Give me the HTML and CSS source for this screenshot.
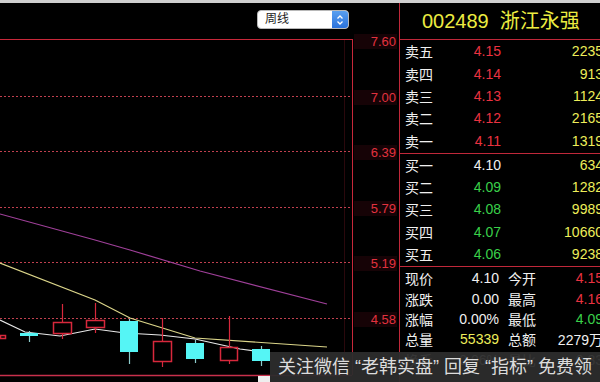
FILE: index.html
```html
<!DOCTYPE html>
<html>
<head>
  <title>002489 浙江永强 周线</title>
  <link rel="stylesheet" href="styles.css">
</head>
<body>
  <div class="topbar"></div>
  <div class="main">

    <!-- chart side -->
    <div class="chart-area">
      <div class="toolbar">
        <div class="select">
          <span class="select-text">周线</span>
          <span class="stepper">
            <svg width="8" height="12" viewBox="0 0 8 12">
              <path d="M1.5 4.5 L4 2 L6.5 4.5 M1.5 7.5 L4 10 L6.5 7.5" fill="none" stroke="#fff" stroke-width="1.3"/>
            </svg>
          </span>
        </div>
      </div>

      <svg class="chart" width="399" height="349" viewBox="0 33 399 349">
        <!-- frame -->
        <line x1="0" y1="39.5" x2="352" y2="39.5" stroke="#c8283a"/>
        <line x1="344.5" y1="40" x2="344.5" y2="375" stroke="#2a080c"/>
        <line x1="352.5" y1="39" x2="352.5" y2="375" stroke="#c8283a"/>
        <line x1="0" y1="375.5" x2="352" y2="375.5" stroke="#c8304c" stroke-width="1.5"/>

        <!-- grid -->
        <g stroke="#c0404f" stroke-dasharray="2 2">
          <line x1="0" y1="96.5" x2="350" y2="96.5"/>
          <line x1="0" y1="151.5" x2="350" y2="151.5"/>
          <line x1="0" y1="207.5" x2="350" y2="207.5"/>
          <line x1="0" y1="262.5" x2="350" y2="262.5"/>
          <line x1="0" y1="318.5" x2="350" y2="318.5"/>
        </g>

        <!-- axis -->
        <g class="axis">
          <rect x="354" y="34" width="43" height="15"/>
          <rect x="354" y="90" width="43" height="15"/>
          <rect x="354" y="145" width="43" height="15"/>
          <rect x="354" y="201" width="43" height="15"/>
          <rect x="354" y="256" width="43" height="15"/>
          <rect x="354" y="312" width="43" height="15"/>
          <text x="396" y="46">7.60</text>
          <text x="396" y="102">7.00</text>
          <text x="396" y="157">6.39</text>
          <text x="396" y="213">5.79</text>
          <text x="396" y="268">5.19</text>
          <text x="396" y="324">4.58</text>
        </g>

        <!-- moving averages -->
        <polyline points="0,214 95,240 130,250 200,271 327,304" fill="none" stroke="#a0409a" stroke-width="1.2"/>
        <polyline points="0,263 95,300 130,318 195,338 327,347" fill="none" stroke="#dcd68a" stroke-width="1.2"/>
        <polyline points="0,320 25,332 60,336 95,329 125,333 160,335 195,339 240,349 262,352" fill="none" stroke="#e8e8e8" stroke-width="1.2"/>

        <!-- candles -->
        <g class="up">
          <rect x="0.5" y="335.5" width="5" height="3"/>
          <line x1="62.5" y1="304" x2="62.5" y2="322"/>
          <line x1="62.5" y1="334" x2="62.5" y2="339"/>
          <rect x="53.5" y="322.5" width="18" height="11"/>
          <line x1="95.5" y1="303" x2="95.5" y2="320"/>
          <line x1="95.5" y1="328" x2="95.5" y2="333"/>
          <rect x="86.5" y="320.5" width="18" height="7"/>
          <line x1="162.5" y1="318" x2="162.5" y2="341"/>
          <line x1="162.5" y1="362" x2="162.5" y2="367"/>
          <rect x="153.5" y="341.5" width="18" height="20"/>
          <line x1="229.5" y1="316" x2="229.5" y2="347"/>
          <line x1="229.5" y1="361" x2="229.5" y2="364"/>
          <rect x="220.5" y="347.5" width="17" height="13"/>
        </g>
        <g class="down">
          <line x1="29.5" y1="331" x2="29.5" y2="342"/>
          <rect x="20" y="333" width="18" height="3"/>
          <line x1="129.5" y1="319" x2="129.5" y2="364"/>
          <rect x="120" y="321" width="18" height="31"/>
          <line x1="195.5" y1="340" x2="195.5" y2="363"/>
          <rect x="186" y="343" width="18" height="16"/>
          <line x1="261.5" y1="346" x2="261.5" y2="366"/>
          <rect x="252" y="349" width="18" height="12"/>
        </g>

        <rect x="258" y="376" width="12" height="6" fill="#eeeeee"/>
      </svg>
    </div>

    <!-- quote side -->
    <div class="quote">
      <div class="title">002489&nbsp;&nbsp;浙江永强</div>

      <div class="book sell">
        <div class="row"><span class="lbl">卖五</span><span class="price red">4.15</span><span class="vol">2235</span></div>
        <div class="row"><span class="lbl">卖四</span><span class="price red">4.14</span><span class="vol">913</span></div>
        <div class="row"><span class="lbl">卖三</span><span class="price red">4.13</span><span class="vol">1124</span></div>
        <div class="row"><span class="lbl">卖二</span><span class="price red">4.12</span><span class="vol">2165</span></div>
        <div class="row"><span class="lbl">卖一</span><span class="price red">4.11</span><span class="vol">1319</span></div>
      </div>

      <div class="book buy">
        <div class="row"><span class="lbl">买一</span><span class="price">4.10</span><span class="vol">634</span></div>
        <div class="row"><span class="lbl">买二</span><span class="price green">4.09</span><span class="vol">1282</span></div>
        <div class="row"><span class="lbl">买三</span><span class="price green">4.08</span><span class="vol">9989</span></div>
        <div class="row"><span class="lbl">买四</span><span class="price green">4.07</span><span class="vol">10660</span></div>
        <div class="row"><span class="lbl">买五</span><span class="price green">4.06</span><span class="vol">9238</span></div>
      </div>

      <div class="stats">
        <div class="srow"><span class="lbl">现价</span><span class="val">4.10</span><span class="lbl2">今开</span><span class="val red">4.15</span></div>
        <div class="srow"><span class="lbl">涨跌</span><span class="val">0.00</span><span class="lbl2">最高</span><span class="val red">4.16</span></div>
        <div class="srow"><span class="lbl">涨幅</span><span class="val">0.00%</span><span class="lbl2">最低</span><span class="val green">4.09</span></div>
        <div class="srow"><span class="lbl">总量</span><span class="val yellow">55339</span><span class="lbl2">总额</span><span class="val">2279万</span></div>
        <div class="srow"><span class="lbl">换手</span><span class="val">0.06%</span><span class="lbl2">量比</span><span class="val">0.83</span></div>
      </div>
    </div>
  </div>

  <div class="watermark">关注微信 “老韩实盘” 回复 “指标” 免费领</div>
</body>
</html>
```

FILE: styles.css
```css
body {
    margin: 0;
    width: 600px;
    height: 382px;
    overflow: hidden;
    background-color: #000;
    font-family: "Liberation Sans", "Noto Sans CJK SC", sans-serif;
    position: relative;
}

.topbar {
    height: 3px;
    background-color: #cfcfcf;
}

.main {
    display: flex;
    height: 379px;
}

.chart-area {
    width: 399px;
    display: flex;
    flex-direction: column;
}

.toolbar {
    height: 30px;
    display: flex;
    justify-content: flex-end;
    align-items: flex-start;
    padding-top: 7px;
    padding-right: 50px;
    box-sizing: border-box;
}

.select {
    width: 92px;
    height: 19px;
    display: flex;
    background-color: #fff;
    border: 1px solid #b8b8b8;
    border-radius: 4px;
    box-sizing: border-box;
    overflow: hidden;
}

.select-text {
    flex: 1;
    font-size: 12px;
    line-height: 17px;
    padding-left: 7px;
    color: #222;
}

.stepper {
    width: 16px;
    display: flex;
    align-items: center;
    justify-content: center;
    background: linear-gradient(#5aa0f0, #2a72dc);
}

.chart {
    display: block;
}

.axis rect {
    fill: #160306;
}

.axis text {
    fill: #e2323f;
    font-size: 13px;
    text-anchor: end;
    font-family: "Liberation Sans", sans-serif;
}

.up rect {
    fill: none;
    stroke: #d8283c;
    stroke-width: 1.5;
}

.up line {
    stroke: #d8283c;
    stroke-width: 1.2;
}

.down rect {
    fill: #55f5f5;
}

.down line {
    stroke: #8ccccc;
    stroke-width: 1.2;
}

/* quote panel */
.quote {
    width: 201px;
    border-left: 1px solid #c0283a;
    box-sizing: border-box;
    overflow: hidden;
    color: #f0f0f0;
    font-size: 14px;
}

.title {
    height: 37px;
    border-bottom: 1px solid #c0283a;
    box-sizing: border-box;
    color: #ecec40;
    font-size: 20px;
    line-height: 36px;
    padding-left: 22px;
    white-space: nowrap;
}

.book {
    border-bottom: 1px solid #c0283a;
    width: 203px;
}

.sell {
    height: 113px;
}

.sell .row {
    height: 22.4px;
}

.buy {
    height: 112px;
}

.buy .row {
    height: 22.2px;
}

.row {
    display: grid;
    grid-template-columns: 40px 61px 102px;
    align-items: center;
}

.lbl {
    padding-left: 5px;
}

.price {
    text-align: right;
}

.vol {
    text-align: right;
    color: #eeee5a;
}

.stats {
    width: 203px;
    padding-top: 1px;
}

.srow {
    display: grid;
    grid-template-columns: 40px 59px 44px 60px;
    height: 20.4px;
    align-items: center;
}

.lbl2 {
    padding-left: 9px;
}

.val {
    text-align: right;
}

.red {
    color: #ea3240;
}

.green {
    color: #3ad04a;
}

.yellow {
    color: #eeee5a;
}

.watermark {
    position: absolute;
    left: 270px;
    top: 352px;
    right: 0;
    bottom: 0;
    background-color: rgba(44, 44, 44, 0.95);
    color: #dcdcdc;
    font-size: 18px;
    line-height: 30px;
    padding-left: 8px;
    white-space: nowrap;
    overflow: hidden;
}
```
